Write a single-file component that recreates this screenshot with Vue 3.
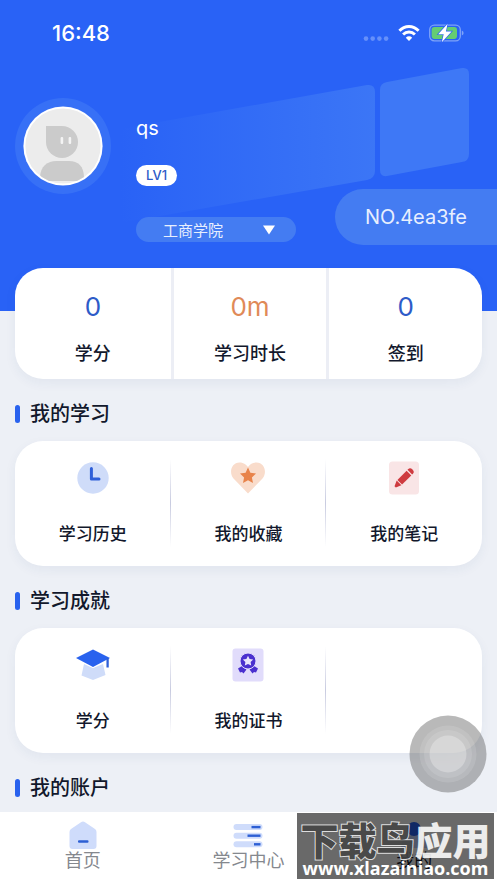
<script setup>
import { ref } from 'vue'

const college = ref('工商学院')
const colleges = ['工商学院']

const stats = [
  { value: '0', label: '学分', tone: 'blue' },
  { value: '0m', label: '学习时长', tone: 'orange' },
  { value: '0', label: '签到', tone: 'blue' },
]

const sections = [
  {
    title: '我的学习',
    items: [
      { icon: 'clock', label: '学习历史' },
      { icon: 'heart', label: '我的收藏' },
      { icon: 'note', label: '我的笔记' },
    ],
  },
  {
    title: '学习成就',
    items: [
      { icon: 'cap', label: '学分' },
      { icon: 'medal', label: '我的证书' },
      null,
    ],
  },
  { title: '我的账户', items: [] },
]

const tabs = [
  { icon: 'home', label: '首页' },
  { icon: 'list', label: '学习中心' },
  { icon: 'user', label: '我的', active: true },
]
</script>

<template>
  <div class="page">
    <header class="hero">
      <svg class="panels" width="497" height="311" viewBox="0 0 497 311" aria-hidden="true">
        <defs>
          <linearGradient id="fade" x1="0" x2="1" y1="0" y2="0">
            <stop offset="0" stop-color="#4580f6" stop-opacity="0" />
            <stop offset="1" stop-color="#4580f6" stop-opacity="0.66" />
          </linearGradient>
        </defs>
        <path d="M120 129 L367 85 Q375 84 375 92 V171 Q375 178 367 180 L120 223 Z" fill="url(#fade)" />
        <path d="M380 90 Q380 83 387 82 L462 68 Q469 67 469 74 V154 Q469 161 462 162 L387 176 Q380 177 380 170 Z" fill="#3e78f6" />
      </svg>

      <div class="status">
        <time class="clock">16:48</time>
        <div class="signals">
          <svg width="26" height="18" viewBox="0 0 26 18" fill="#6690fa" aria-hidden="true">
            <circle cx="3" cy="14.6" r="2.3" /><circle cx="9.7" cy="14.6" r="2.3" />
            <circle cx="16.4" cy="14.6" r="2.3" /><circle cx="23.1" cy="14.6" r="2.3" />
          </svg>
          <svg width="22" height="18" viewBox="0 0 22 18" fill="none" stroke="#fff" stroke-width="2.9" aria-hidden="true">
            <path d="M1.4 6.8 C6.8 1.1 15.2 1.1 20.6 6.8" />
            <path d="M5.1 10.6 C8.4 7.2 13.6 7.2 16.9 10.6" />
            <path d="M11 17 L7.8 13.7 C9.6 11.9 12.4 11.9 14.2 13.7 Z" fill="#fff" stroke="none" />
          </svg>
          <svg width="35" height="20" viewBox="0 0 35 20" aria-hidden="true">
            <rect x="0.7" y="2.2" width="30.6" height="15.6" rx="4.6" fill="none" stroke="#7ea3f8" stroke-width="1.3" />
            <path d="M32.8 7.6 Q34.6 8.2 34.6 10 Q34.6 11.8 32.8 12.4 Z" fill="#7ea3f8" />
            <rect x="2.6" y="4.1" width="25.4" height="11.8" rx="2.8" fill="#65cd73" />
            <path d="M18.6 0.8 L9.2 11.2 H14.7 L12.8 19.2 L22.6 8.4 H16.9 Z" fill="#fff" stroke="#2962f6" stroke-width="1.3" paint-order="stroke" />
          </svg>
        </div>
      </div>

      <div class="profile">
        <div class="avatar">
          <svg width="80" height="80" viewBox="0 0 80 80" role="img" aria-label="头像">
            <defs><clipPath id="face"><circle cx="40" cy="40" r="37.6" /></clipPath></defs>
            <circle cx="40" cy="40" r="39.6" fill="#fff" />
            <g clip-path="url(#face)">
              <rect width="80" height="80" fill="#ececec" />
              <path d="M23 20 H39 A16 16 0 1 1 23 36 Z" fill="#cbcbcb" />
              <rect x="37.6" y="31" width="2.6" height="7" rx="1" fill="#f4f4f4" />
              <rect x="45.6" y="31" width="2.6" height="7" rx="1" fill="#f4f4f4" />
              <path d="M17 72 C17 60 25 55 33 55 H46 C55 55 61 60 61 72 L56 75 H22 Z" fill="#cbcbcb" />
            </g>
          </svg>
        </div>
        <div class="info">
          <h1 class="name">qs</h1>
          <span class="level">LV1</span>
          <div class="picker">
            <select v-model="college" aria-label="学院">
              <option v-for="c in colleges" :key="c">{{ c }}</option>
            </select>
            <svg width="12" height="10" viewBox="0 0 12 10" aria-hidden="true"><path d="M0 0.5 H12 L6 9.5 Z" fill="#fff" /></svg>
          </div>
        </div>
        <div class="number">NO.4ea3fe</div>
      </div>
    </header>

    <main class="content">
      <div class="stats">
        <button v-for="s in stats" :key="s.label" type="button" class="stat">
          <span class="value" :class="s.tone">{{ s.value }}</span>
          <span class="stat-label">{{ s.label }}</span>
        </button>
      </div>

      <section v-for="sec in sections" :key="sec.title">
        <h2 class="title">{{ sec.title }}</h2>
        <div v-if="sec.items.length" class="card">
          <div v-for="(item, i) in sec.items" :key="i" class="cell">
            <button v-if="item" type="button" class="entry">
              <svg width="36" height="36" viewBox="0 0 36 36" aria-hidden="true">
                <g v-if="item.icon === 'clock'">
                  <circle cx="18" cy="18" r="15.7" fill="#cfdcf9" />
                  <path d="M16.4 8.6 V19 H24" fill="none" stroke="#2f5fd8" stroke-width="3" stroke-linecap="round" stroke-linejoin="round" />
                </g>
                <g v-else-if="item.icon === 'heart'">
                  <path d="M18 33.5 L3.5 18.5 C-1.5 12.5 1.5 2.5 9.5 2.5 C14 2.5 16.5 5 18 7 C19.5 5 22 2.5 26.5 2.5 C34.5 2.500 37.5 12.5 32.5 18.5 Z" fill="#f9dccb" />
                  <path d="M18 7.5 L20.4 12.8 L26 13.5 L21.9 17.4 L23 23 L18 20.3 L13 23 L14.1 17.4 L10 13.5 L15.6 12.8 Z" fill="#e8834a" />
                </g>
                <g v-else-if="item.icon === 'note'">
                  <rect x="3" y="1.5" width="30" height="33" rx="3.5" fill="#f9e5e6" />
                  <g transform="translate(18 18) rotate(45)" fill="#cf3b40">
                    <rect x="-3.3" y="-7" width="6.6" height="13" />
                    <path d="M-3.3 -8.2 V-9.4 Q-3.3 -12 0 -12 Q3.3 -12 3.3 -9.4 V-8.2 Z" />
                    <path d="M-3.3 7 H3.3 L0.9 12.5 H-0.9 Z" />
                  </g>
                </g>
                <g v-else-if="item.icon === 'cap'">
                  <path d="M9 17 L18 21 L28 17 L30.5 28 L18 33 L6.5 28.5 Z" fill="#cfdcf9" />
                  <path d="M18 2.5 L35 11 L18 20 L1 11 Z" fill="#2962ee" stroke="#fff" stroke-width="1.6" paint-order="stroke" />
                  <path d="M32.6 11 V20.5" stroke="#2f5fd8" stroke-width="2.3" />
                </g>
                <g v-else>
                  <rect x="2.5" y="1.5" width="31" height="33" rx="3" fill="#e1dcfb" />
                  <path d="M12 19 L16.5 22.5 L13.5 26.5 L12 25 L10 25.5 L8 21.5 Z M24 19 L19.500 22.5 L22.5 26.5 L24 25 L26 25.5 L28 21.5 Z" fill="#4a30cf" />
                  <circle cx="18" cy="14" r="8" fill="#4a30cf" stroke="#e1dcfb" stroke-width="1" />
                  <path d="M18 8.8 L19.6 12 L23.2 12.5 L20.6 15 L21.2 18.6 L18 16.9 L14.8 18.6 L15.4 15 L12.8 12.5 L16.4 12 Z" fill="#e9e5fc" />
                </g>
              </svg>
              <span class="entry-label">{{ item.label }}</span>
            </button>
          </div>
        </div>
      </section>
    </main>

    <nav class="tabs">
      <a v-for="t in tabs" :key="t.label" href="#" class="tab" :class="{ active: t.active }">
        <svg width="30" height="28" viewBox="0 0 30 28" aria-hidden="true">
          <g v-if="t.icon === 'home'">
            <path d="M13 1.2 Q15 -0.2 17 1.2 L27 8 Q28.5 9.200 28.5 11 V25 Q28.5 28 25.5 28 H4.5 Q1.5 28 1.5 25 V11 Q1.5 9.2 3 8 Z" fill="#cfdcfb" />
            <rect x="10" y="19.2" width="10.5" height="2.6" rx="1" fill="#2d5fd4" />
          </g>
          <g v-else-if="t.icon === 'list'">
            <g fill="#cfdcfb">
              <rect x="0.5" y="3" width="29" height="6" rx="3" />
              <rect x="0.5" y="11.7" width="29" height="6" rx="3" />
              <rect x="0.5" y="20.3" width="29" height="6" rx="3" />
            </g>
            <g fill="#2d5fd4">
              <rect x="18.5" y="4.9" width="9" height="2.4" />
              <rect x="14.5" y="13.5" width="13" height="2.4" />
              <rect x="21" y="22.1" width="6.5" height="2.4" />
            </g>
          </g>
          <g v-else>
            <path d="M2 27 Q3 12 15 12 Q27 12 28 27 Z" fill="#c3d4ff" />
            <circle cx="15" cy="8" r="7" fill="#2962f6" />
          </g>
        </svg>
        <span>{{ t.label }}</span>
      </a>
    </nav>

    <button type="button" class="assist" aria-label="辅助触控">
      <svg width="78" height="78" viewBox="0 0 78 78" aria-hidden="true">
        <circle cx="39" cy="39" r="38.5" fill="#585858" fill-opacity="0.42" />
        <circle cx="39" cy="39" r="28.5" fill="#fff" fill-opacity="0.12" />
        <circle cx="39" cy="39" r="24" fill="#fff" fill-opacity="0.12" />
        <circle cx="39" cy="39" r="18.5" fill="#fff" fill-opacity="0.28" />
      </svg>
    </button>

    <aside class="mark">
      <div class="mark-name"><span class="outlined">下载鸟</span><span>应用</span></div>
      <div class="mark-site">www.xlazainiao.com</div>
    </aside>
  </div>
</template>

<style>
body {
  margin: 0;
  background: #edf0f6;
}
</style>

<style scoped>
.page {
  position: relative;
  display: flex;
  flex-direction: column;
  min-height: 100vh;
  overflow: hidden;
  background: #edf0f6;
  color: #12182c;
  font-family: Inter, "Noto Sans CJK SC", sans-serif;
}

button {
  margin: 0;
  padding: 0;
  border: 0;
  background: none;
  color: inherit;
  font: inherit;
  cursor: pointer;
}

svg {
  display: block;
  flex: none;
}

.hero {
  position: relative;
  padding-bottom: 66px;
  background: #2962f6;
  color: #fff;
}

.panels {
  position: absolute;
  top: 0;
  right: 0;
}

.status {
  position: relative;
  display: flex;
  align-items: center;
  justify-content: space-between;
  height: 66px;
  padding: 0 33px 0 52px;
}

.clock {
  font-size: 22px;
  font-weight: 500;
}

.signals {
  display: flex;
  align-items: center;
  gap: 9px;
}

.profile {
  position: relative;
  display: flex;
  margin-top: 32px;
  padding-left: 15px;
}

.avatar {
  display: grid;
  place-items: center;
  flex: none;
  width: 96px;
  height: 96px;
  border-radius: 50%;
  background: #3770f6;
}

.info {
  display: flex;
  flex-direction: column;
  align-items: flex-start;
  margin-left: 25px;
  padding: 16px 0 3px;
}

.name {
  margin: 0 0 23px;
  font-size: 20px;
  font-weight: 400;
  line-height: 28px;
}

.level {
  padding: 0 10px;
  margin-bottom: 31px;
  border-radius: 11px;
  background: #fff;
  color: #2d5bc8;
  font-size: 13px;
  font-weight: 500;
  line-height: 21px;
}

.picker {
  display: grid;
  align-items: center;
  width: 160px;
  border-radius: 13px;
  background: #447cf2;
}

.picker select,
.picker svg {
  grid-area: 1 / 1;
}

.picker select {
  appearance: none;
  width: 100%;
  height: 25px;
  padding: 0 0 0 27px;
  border: 0;
  border-radius: 13px;
  background: transparent;
  color: #e8effe;
  font-family: "Noto Sans CJK SC", sans-serif;
  font-size: 15px;
}

.picker svg {
  justify-self: end;
  margin-right: 21px;
  pointer-events: none;
}

.number {
  align-self: flex-end;
  margin-left: auto;
  padding: 0 30px;
  border-radius: 28px 0 0 28px;
  background: #447cf2;
  color: #e8effe;
  font-size: 20px;
  font-weight: 400;
  line-height: 56px;
}

.content {
  position: relative;
  flex: 1;
  margin-top: -43px;
  padding: 0 15px;
}

.stats,
.card {
  display: grid;
  grid-template-columns: repeat(3, 1fr);
  border-radius: 28px;
  background: #fff;
  box-shadow: 0 4px 12px rgba(40, 60, 120, 0.06);
}

.stat {
  display: flex;
  flex-direction: column;
  align-items: center;
  gap: 17px;
  height: 111px;
  padding-top: 23px;
}

.stat + .stat {
  border-left: 3px solid #eceef5;
}

.value {
  font-size: 26px;
  line-height: 32px;
}

.blue {
  color: #2d5bc8;
}

.orange {
  color: #e08a58;
}

.stat-label {
  font-size: 18px;
  font-weight: 500;
  line-height: 28px;
}

.title {
  display: flex;
  align-items: center;
  gap: 10px;
  margin: 21px 0 13px;
  font-size: 20px;
  font-weight: 500;
  line-height: 28px;
}

.title::before {
  content: "";
  width: 5px;
  height: 18px;
  border-radius: 3px;
  background: #2962ee;
}

section:last-child .title {
  margin-bottom: 0;
}

.cell {
  display: flex;
  justify-content: center;
  height: 125px;
}

.cell:not(:last-child) {
  background: linear-gradient(#fff, #c8cbe0, #fff) right 18px / 1px 88px no-repeat;
}

.entry {
  display: flex;
  flex-direction: column;
  align-items: center;
  gap: 26px;
  width: 100%;
  padding-top: 19px;
}

.entry-label {
  font-size: 17px;
  font-weight: 500;
  line-height: 24px;
}

.tabs {
  position: relative;
  display: grid;
  grid-template-columns: repeat(3, 1fr);
  background: #fff;
}

.tab {
  display: flex;
  flex-direction: column;
  align-items: center;
  gap: 1px;
  padding: 9px 0 11px;
  color: #85888e;
  font-size: 18px;
  line-height: 22px;
  text-decoration: none;
}

.tab.active {
  color: #12182c;
}

.assist {
  position: absolute;
  right: 10px;
  bottom: 90px;
}

.mark {
  position: absolute;
  right: 3px;
  bottom: 4px;
  box-sizing: border-box;
  width: 197px;
  height: 66px;
  padding-top: 7px;
  background: rgba(0, 0, 0, 0.59);
  color: #fff;
  font-weight: 700;
  text-align: center;
  white-space: nowrap;
}

.mark-name {
  font-family: "Noto Sans CJK SC", sans-serif;
  font-size: 38px;
  font-weight: 900;
  line-height: 38px;
  opacity: 0.88;
}

.outlined {
  color: #454545;
  -webkit-text-stroke: 2px #eee;
  paint-order: stroke fill;
}

.mark-site {
  font-family: "Open Sans", sans-serif;
  font-size: 18px;
  line-height: 20px;
}
</style>
